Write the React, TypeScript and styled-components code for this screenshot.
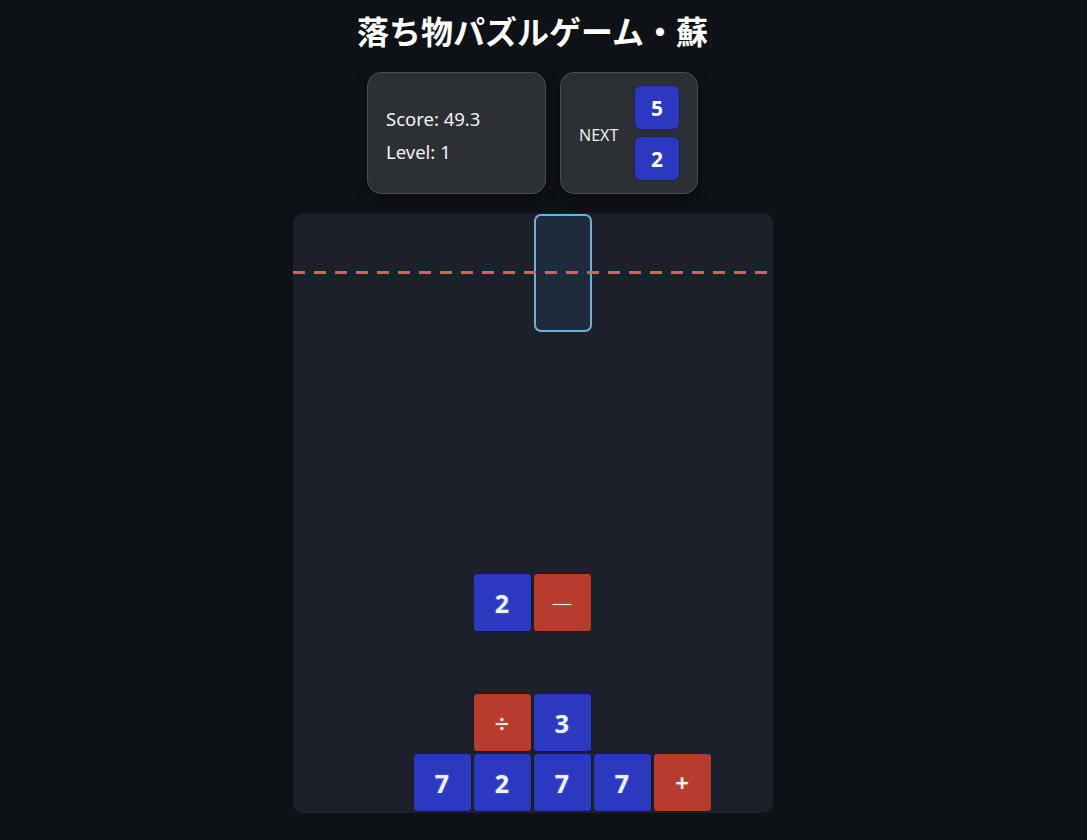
import styled, { createGlobalStyle } from "styled-components";

const GlobalStyle = createGlobalStyle`
  html, body {
    margin: 0;
    padding: 0;
    background: #0e1116;
  }
  body {
    font-family: "Noto Sans", "Noto Sans CJK JP", sans-serif;
    color: #ffffff;
  }
`;

const Page = styled.div`
  width: 1065px;
  min-height: 840px;
  display: flex;
  flex-direction: column;
  align-items: center;
`;

const Title = styled.h1`
  margin: 6px 0 0;
  font-family: "Noto Sans CJK JP", "Noto Sans", sans-serif;
  font-size: 32px;
  font-weight: 700;
  line-height: 48px;
`;

const InfoRow = styled.div`
  display: flex;
  gap: 14px;
  margin-top: 18px;
`;

const Panel = styled.div<{ $w: number }>`
  width: ${(p) => p.$w}px;
  height: 122px;
  box-sizing: border-box;
  background: #2c2f34;
  border: 1px solid #4a4d53;
  border-radius: 14px;
  box-shadow: 0 4px 12px rgba(0, 0, 0, 0.35);
  display: flex;
  align-items: center;
`;

const Stats = styled.div`
  display: flex;
  flex-direction: column;
  gap: 8px;
  padding: 4px 0 0 18px;
  font-size: 18.5px;
  line-height: 25px;
  color: #f4f4f4;
`;

const NextLabel = styled.span`
  font-size: 16px;
  color: #eeeeee;
  padding: 3px 0 0 18px;
  width: 56px;
`;

const PreviewStack = styled.div`
  display: flex;
  flex-direction: column;
  gap: 6px;
  margin-left: auto;
  margin-right: 17px;
`;

const PreviewBlock = styled.div`
  width: 46px;
  height: 45px;
  border-radius: 7px;
  background: #2a39c0;
  border: 1px solid #1c2350;
  box-sizing: border-box;
  display: flex;
  align-items: center;
  justify-content: center;
  font-size: 21px;
  font-weight: 700;
`;

const Board = styled.div`
  position: relative;
  margin-top: 19px;
  width: 480px;
  height: 600px;
  border-radius: 10px;
  background: #1b202a;
  display: grid;
  grid-template-columns: repeat(8, 60px);
  grid-template-rows: repeat(10, 60px);
  overflow: hidden;
`;

const Block = styled.div<{ $col: number; $row: number; $op?: boolean }>`
  grid-column: ${(p) => p.$col + 1};
  grid-row: ${(p) => p.$row + 1};
  margin: 0 1px 1px 0;
  box-sizing: border-box;
  border: 1px solid #161b26;
  border-radius: 4px;
  background: ${(p) => (p.$op ? "#b73c2d" : "#2a39c0")};
  display: flex;
  align-items: center;
  justify-content: center;
  font-size: 25px;
  font-weight: 700;
  color: #eef0fa;
  text-shadow: 0 0 2px rgba(255, 255, 255, 0.35);
`;

const OpGlyph = styled.span<{ $size: number; $weight: number }>`
  font-size: ${(p) => p.$size}px;
  font-weight: ${(p) => p.$weight};
`;

const Falling = styled.div`
  grid-column: 5;
  grid-row: 1 / span 2;
  margin: 1px;
  box-sizing: border-box;
  border: 2.5px solid #6cb0de;
  border-radius: 7px;
  background: #1f2b3b;
`;

const DangerLine = styled.div`
  position: absolute;
  left: 0;
  right: 0;
  top: 58px;
  height: 3px;
  background: repeating-linear-gradient(
    90deg,
    #e65a52 0 12px,
    transparent 12px 21px
  );
  pointer-events: none;
`;

type Cell = { c: number; r: number; v: string; op?: boolean };

const cells: Cell[] = [
  { c: 3, r: 6, v: "2" },
  { c: 4, r: 6, v: "—", op: true },
  { c: 3, r: 8, v: "÷", op: true },
  { c: 4, r: 8, v: "3" },
  { c: 2, r: 9, v: "7" },
  { c: 3, r: 9, v: "2" },
  { c: 4, r: 9, v: "7" },
  { c: 5, r: 9, v: "7" },
  { c: 6, r: 9, v: "+", op: true },
];

const opStyle: Record<string, { size: number; weight: number }> = {
  "—": { size: 20, weight: 300 },
  "÷": { size: 26, weight: 400 },
  "+": { size: 24, weight: 600 },
};

export default function App() {
  return (
    <Page>
      <GlobalStyle />
      <Title>落ち物パズルゲーム・蘇</Title>
      <InfoRow>
        <Panel $w={179}>
          <Stats>
            <span>Score: 49.3</span>
            <span>Level: 1</span>
          </Stats>
        </Panel>
        <Panel $w={138}>
          <NextLabel>NEXT</NextLabel>
          <PreviewStack>
            <PreviewBlock>5</PreviewBlock>
            <PreviewBlock>2</PreviewBlock>
          </PreviewStack>
        </Panel>
      </InfoRow>
      <Board>
        <Falling />
        {cells.map((b) => (
          <Block key={`${b.c}-${b.r}`} $col={b.c} $row={b.r} $op={b.op}>
            {b.op ? (
              <OpGlyph $size={opStyle[b.v].size} $weight={opStyle[b.v].weight}>
                {b.v}
              </OpGlyph>
            ) : (
              b.v
            )}
          </Block>
        ))}
        <DangerLine />
      </Board>
    </Page>
  );
}
